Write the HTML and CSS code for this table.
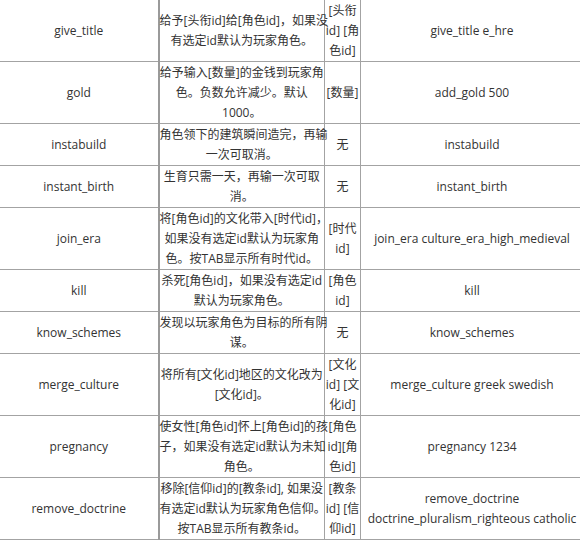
FILE: index.html
```html
<!DOCTYPE html>
<html lang="zh">
<head>
<meta charset="utf-8">
<link rel="stylesheet" href="styles.css">
</head>
<body>
<table class="cmds">
  <colgroup>
    <col class="c-name">
    <col class="c-desc">
    <col class="c-arg">
    <col class="c-ex">
  </colgroup>
  <tbody>
    <tr>
      <td>give_title</td>
      <td>给予[头衔id]给[角色id]，如果没<br>有选定id默认为玩家角色。</td>
      <td>[头衔<br>id] [角<br>色id]</td>
      <td>give_title e_hre</td>
    </tr>
    <tr>
      <td>gold</td>
      <td>给予输入[数量]的金钱到玩家角<br>色。负数允许减少。默认<br>1000。</td>
      <td>[数量]</td>
      <td>add_gold 500</td>
    </tr>
    <tr>
      <td>instabuild</td>
      <td>角色领下的建筑瞬间造完，再输<br>一次可取消。</td>
      <td>无</td>
      <td>instabuild</td>
    </tr>
    <tr>
      <td>instant_birth</td>
      <td>生育只需一天，再输一次可取<br>消。</td>
      <td>无</td>
      <td>instant_birth</td>
    </tr>
    <tr>
      <td>join_era</td>
      <td>将[角色id]的文化带入[时代id]，<br>如果没有选定id默认为玩家角<br>色。按TAB显示所有时代id。</td>
      <td>[时代<br>id]</td>
      <td>join_era culture_era_high_medieval</td>
    </tr>
    <tr>
      <td>kill</td>
      <td>杀死[角色id]，如果没有选定id<br>默认为玩家角色。</td>
      <td>[角色<br>id]</td>
      <td>kill</td>
    </tr>
    <tr>
      <td>know_schemes</td>
      <td>发现以玩家角色为目标的所有阴<br>谋。</td>
      <td>无</td>
      <td>know_schemes</td>
    </tr>
    <tr>
      <td>merge_culture</td>
      <td>将所有[文化id]地区的文化改为<br>[文化id]。</td>
      <td>[文化<br>id] [文<br>化id]</td>
      <td>merge_culture greek swedish</td>
    </tr>
    <tr>
      <td>pregnancy</td>
      <td>使女性[角色id]怀上[角色id]的孩<br>子，如果没有选定id默认为未知<br>角色。</td>
      <td>[角色<br>id][角<br>色id]</td>
      <td>pregnancy 1234</td>
    </tr>
    <tr>
      <td>remove_doctrine</td>
      <td>移除[信仰id]的[教条id], 如果没<br>有选定id默认为玩家角色信仰。<br>按TAB显示所有教条id。</td>
      <td>[教条<br>id] [信<br>仰id]</td>
      <td>remove_doctrine<br>doctrine_pluralism_righteous catholic</td>
    </tr>
  </tbody>
</table>
</body>
</html>
```

FILE: styles.css
```css
html, body {
  margin: 0;
  padding: 0;
  background: #fff;
  overflow: hidden;
}

.cmds {
  border-collapse: collapse;
  table-layout: fixed;
  width: 584px;
  margin: -1px 0 0 -1px;
  font-family: "Open Sans", "Noto Sans CJK SC", sans-serif;
  font-size: 12px;
  line-height: 20px;
  color: #333;
}

.c-name { width: 159px; }
.c-desc { width: 166px; }
.c-arg { width: 36px; }
.c-ex { width: 223px; }

.cmds td {
  border: 1px solid #a3a3a3;
  padding: 1px 0 0;
  text-align: center;
  vertical-align: middle;
  white-space: nowrap;
}

.cmds td:first-child {
  border-right: 2px solid #9a9a9a;
}
```
